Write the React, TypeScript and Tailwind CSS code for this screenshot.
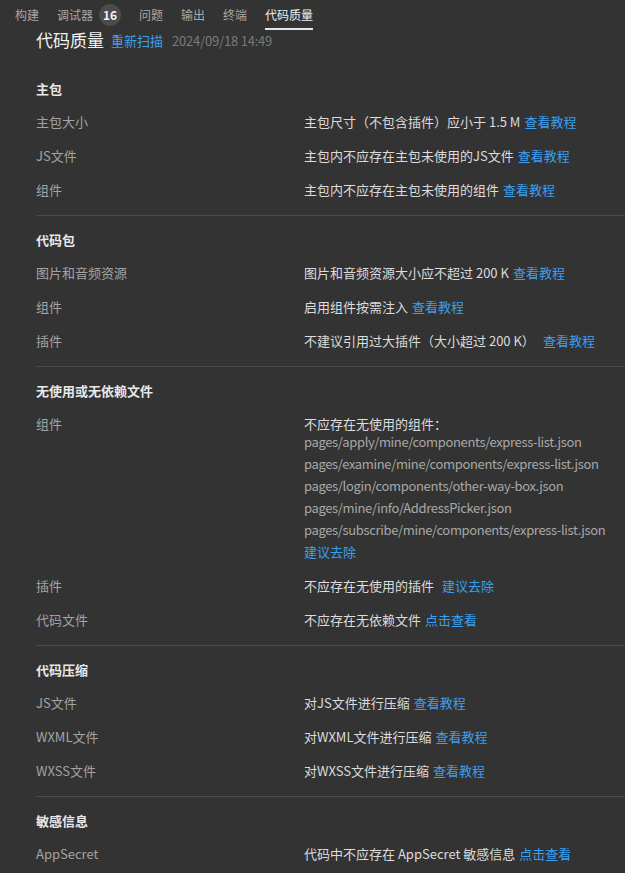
import React from 'react';

type Row = {
  label: string;
  text: string;
  link?: string;
  gap?: boolean;
  files?: string[];
};

type Section = { title: string; rows: Row[] };

const TABS = ['构建', '调试器', '问题', '输出', '终端', '代码质量'];

const SECTIONS: Section[] = [
  {
    title: '主包',
    rows: [
      { label: '主包大小', text: '主包尺寸（不包含插件）应小于 1.5 M', link: '查看教程' },
      { label: 'JS文件', text: '主包内不应存在主包未使用的JS文件', link: '查看教程' },
      { label: '组件', text: '主包内不应存在主包未使用的组件', link: '查看教程' },
    ],
  },
  {
    title: '代码包',
    rows: [
      { label: '图片和音频资源', text: '图片和音频资源大小应不超过 200 K', link: '查看教程' },
      { label: '组件', text: '启用组件按需注入', link: '查看教程' },
      { label: '插件', text: '不建议引用过大插件（大小超过 200 K）', link: '查看教程', gap: true },
    ],
  },
  {
    title: '无使用或无依赖文件',
    rows: [
      {
        label: '组件',
        text: '不应存在无使用的组件：',
        link: '建议去除',
        files: [
          'pages/apply/mine/components/express-list.json',
          'pages/examine/mine/components/express-list.json',
          'pages/login/components/other-way-box.json',
          'pages/mine/info/AddressPicker.json',
          'pages/subscribe/mine/components/express-list.json',
        ],
      },
      { label: '插件', text: '不应存在无使用的插件', link: '建议去除', gap: true },
      { label: '代码文件', text: '不应存在无依赖文件', link: '点击查看' },
    ],
  },
  {
    title: '代码压缩',
    rows: [
      { label: 'JS文件', text: '对JS文件进行压缩', link: '查看教程' },
      { label: 'WXML文件', text: '对WXML文件进行压缩', link: '查看教程' },
      { label: 'WXSS文件', text: '对WXSS文件进行压缩', link: '查看教程' },
    ],
  },
  {
    title: '敏感信息',
    rows: [{ label: 'AppSecret', text: '代码中不应存在 AppSecret 敏感信息', link: '点击查看' }],
  },
];

function CheckRow({ row }: { row: Row }) {
  if (row.files) {
    return (
      <div className="flex pt-[9px] pb-[6px]">
        <div className="w-[268px] shrink-0 leading-[15px] text-[#a3a3a3]">{row.label}</div>
        <div className="flex flex-col">
          <span className="leading-[15px] text-[#dcdcdc]">{row.text}</span>
          {row.files.map((f) => (
            <span key={f} className="leading-[22px] tracking-[-0.35px] text-[#a8a8a8]">
              {f}
            </span>
          ))}
          <span className="leading-[22px] text-[#3c9ff0]">{row.link}</span>
        </div>
      </div>
    );
  }
  return (
    <div className="flex h-[34px] items-center">
      <div className="w-[268px] shrink-0 text-[#a3a3a3]">{row.label}</div>
      <div className="text-[#dcdcdc]">
        {row.text}
        <span className={row.gap ? 'ml-[8px] text-[#3c9ff0]' : 'ml-[4px] text-[#3c9ff0]'}>{row.link}</span>
      </div>
    </div>
  );
}

export default function App() {
  return (
    <div
      className="min-h-[873px] w-full overflow-hidden bg-[#333333] text-[13px]"
      style={{ fontFamily: '"Noto Sans CJK SC", "Noto Sans", sans-serif' }}
    >
      {/* tabs */}
      <div className="flex h-[30px] items-stretch gap-[18px] pl-[15px] text-[12px]">
        {TABS.map((t) => {
          const active = t === '代码质量';
          return (
            <div
              key={t}
              className={
                active
                  ? 'flex items-center border-b-2 border-[#e6e6e6] pt-[2px] text-[#f0f0f0]'
                  : 'flex items-center border-b-2 border-transparent pt-[2px] text-[#a8a8a8]'
              }
            >
              {t}
              {t === '调试器' && (
                <span className="ml-[6px] flex h-[22px] w-[22px] items-center justify-center rounded-full bg-[#4b4b4b] text-[12px] font-bold text-[#f0f0f0]">
                  16
                </span>
              )}
            </div>
          );
        })}
      </div>

      {/* header */}
      <div className="flex h-[20px] items-center pl-[36px]">
        <span className="text-[17px] text-[#f2f2f2]">代码质量</span>
        <span className="ml-[7px] pt-[1px] text-[#3c9ff0]">重新扫描</span>
        <span className="ml-[9px] pt-[1px] tracking-[-0.2px] text-[#7a7a7a]">2024/09/18 14:49</span>
      </div>

      <div className="pl-[36px] pt-[22px]">
        {SECTIONS.map((s, i) => (
          <div key={s.title} className={i > 0 ? 'border-t border-[#4a4a4a] pb-[8px] pt-[7px]' : 'pb-[8px]'}>
            <div className="flex h-[33px] items-center font-bold text-[#e8e8e8]">{s.title}</div>
            {s.rows.map((r) => (
              <CheckRow key={r.label + r.text} row={r} />
            ))}
          </div>
        ))}
      </div>
    </div>
  );
}
